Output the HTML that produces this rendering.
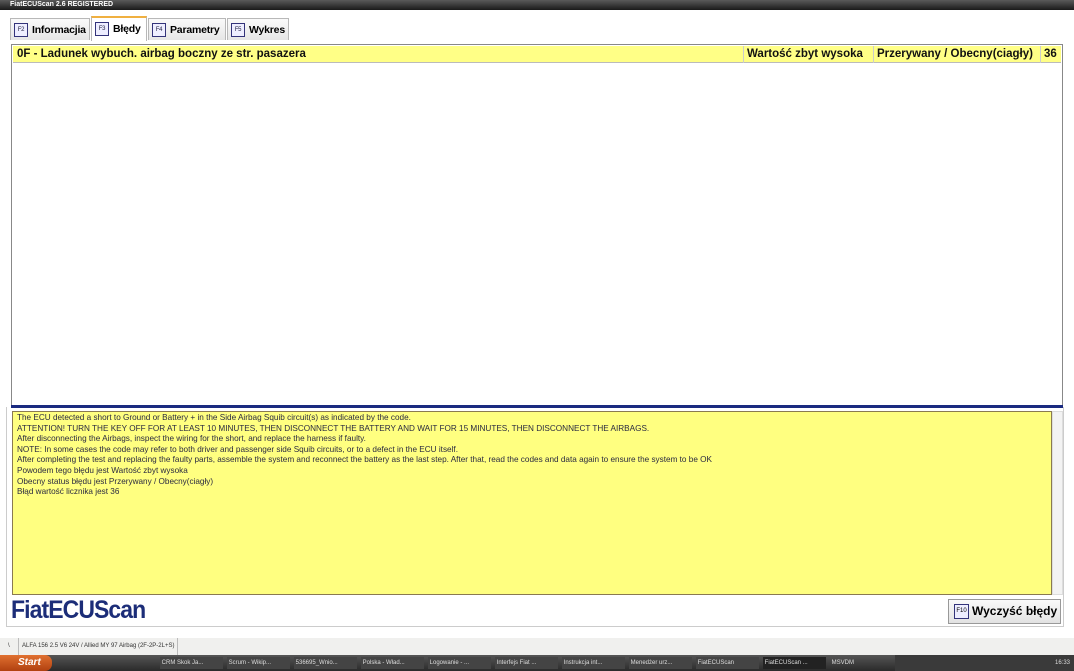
<!DOCTYPE html>
<html><head><meta charset="utf-8"><style>
*{margin:0;padding:0;box-sizing:border-box}
body{width:1074px;height:671px;overflow:hidden;background:#f4f4f2;font-family:"Liberation Sans",sans-serif;position:relative}
.abs{position:absolute}
.title{left:0;top:0;width:1074px;height:10px;background:linear-gradient(#5a5a5a,#1a1a1a);color:#fff;font-size:7px;font-weight:bold;line-height:10px;padding-left:10px}
.tab{top:18px;height:22px;border:1px solid #b8b8b8;border-bottom:none;background:linear-gradient(#fafafa,#e6e6e6);font-size:10.5px;font-weight:bold;line-height:22px;padding-left:21px;letter-spacing:-0.2px}
.tab .k{position:absolute;left:3px;top:4px;width:14px;height:14px;border:1px solid #33337a;background:#eef;font-size:6px;line-height:12px;text-align:center;color:#224;font-weight:normal}
.panel{left:11px;top:44px;width:1052px;height:364px;border:1px solid #888;background:#fff}
.hdr{left:1px;top:1px;width:1048px;height:17px;background:#ffff86;border-bottom:1px solid #bbb;font-size:11.5px;font-weight:bold;line-height:17px;color:#111}
.msg{left:12px;top:411px;width:1040px;height:184px;background:#ffff80;border:1px solid #8a7a50;font-size:8.2px;line-height:10.6px;color:#2a2a40;padding:1px 4px}
</style></head><body>
<div class="abs title">FiatECUScan 2.6 REGISTERED</div>
<div class="abs" style="left:0;top:10px;width:1074px;height:628px;background:#fff"></div>
<div class="abs tab" style="left:10px;width:80px"><span class="k">F2</span>Informacjia</div>
<div class="abs tab" style="left:91px;top:16px;height:25px;width:56px;background:#fff;border-top:2px solid #f0b040"><span class="k">F3</span>Błędy</div>
<div class="abs tab" style="left:148px;width:78px"><span class="k">F4</span>Parametry</div>
<div class="abs tab" style="left:227px;width:62px"><span class="k">F5</span>Wykres</div>
<div class="abs panel">
<div class="abs hdr"><span class="abs" style="left:4px">0F - Ladunek wybuch. airbag boczny ze str. pasazera</span>
<span class="abs" style="left:730px;border-left:1px solid #ccc;padding-left:3px">Wartość zbyt wysoka</span>
<span class="abs" style="left:860px;border-left:1px solid #ccc;padding-left:3px">Przerywany / Obecny(ciagły)</span>
<span class="abs" style="left:1027px;border-left:1px solid #ccc;padding-left:3px">36</span></div>
</div>
<div class="abs" style="left:11px;top:405px;width:1052px;height:3px;background:#1a2a80"></div>
<div class="abs msg">The ECU detected a short to Ground or Battery + in the Side Airbag Squib circuit(s) as indicated by the code.<br>ATTENTION! TURN THE KEY OFF FOR AT LEAST 10 MINUTES, THEN DISCONNECT THE BATTERY AND WAIT FOR 15 MINUTES, THEN DISCONNECT THE AIRBAGS.<br>After disconnecting the Airbags, inspect the wiring for the short, and replace the harness if faulty.<br>NOTE: In some cases the code may refer to both driver and passenger side Squib circuits, or to a defect in the ECU itself.<br>After completing the test and replacing the faulty parts, assemble the system and reconnect the battery as the last step. After that, read the codes and data again to ensure the system to be OK<br>Powodem tego błędu jest Wartość zbyt wysoka<br>Obecny status błędu jest Przerywany / Obecny(ciagły)<br>Błąd wartość licznika jest 36</div>
<div class="abs" style="left:1052px;top:411px;width:11px;height:184px;background:#f3f3f3;border:1px solid #ddd"></div>
<div class="abs" style="left:6px;top:407px;width:1058px;height:220px;border:1px solid #ccc;border-top:none;pointer-events:none"></div>
<div class="abs" style="left:11px;top:596px;font-size:25px;font-weight:bold;color:#1c2d78;letter-spacing:-1px;transform:scaleX(.92);transform-origin:left">FiatECUScan</div>
<div class="abs" style="left:948px;top:599px;width:113px;height:25px;border:1px solid #999;background:linear-gradient(#fafafa,#e2e2e2);font-size:12px;font-weight:bold;line-height:23px;padding-left:23px">Wyczyść błędy<span class="abs" style="left:5px;top:4px;width:15px;height:15px;border:1px solid #33337a;background:#eef;font-size:6px;line-height:13px;text-align:center;font-weight:normal">F10</span></div>
<div class="abs" style="left:0;top:638px;width:1074px;height:17px;background:#f0f0ee;font-size:6px;line-height:17px;color:#333"><span style="padding-left:8px">\</span><span class="abs" style="left:18px;border-left:1px solid #bbb;border-right:1px solid #bbb;padding:0 3px">ALFA 156 2.5 V6 24V / Allied MY 97 Airbag (2F-2P-2L+S)</span></div>
<div class="abs" style="left:0;top:655px;width:1074px;height:16px;background:linear-gradient(#555,#2a2a2a)"></div>
<div class="abs" style="left:0;top:655px;width:52px;height:16px;background:linear-gradient(#e07030,#b04010);color:#fff;font-size:10px;font-weight:bold;font-style:italic;line-height:16px;padding-left:18px;border-radius:0 7px 7px 0">Start</div>
<div class="abs" style="left:160px;top:657px;width:730px;height:12px;display:flex;gap:4px;font-size:6px;color:#ddd;line-height:12px">
<span style="width:63px;background:#444">&nbsp;CRM Skok Ja...</span><span style="width:63px;background:#444">&nbsp;Scrum - Wikip...</span><span style="width:63px;background:#444">&nbsp;536695_Wnio...</span><span style="width:63px;background:#444">&nbsp;Polska - Wład...</span><span style="width:63px;background:#444">&nbsp;Logowanie - ...</span><span style="width:63px;background:#444">&nbsp;Interfejs Fiat ...</span><span style="width:63px;background:#444">&nbsp;Instrukcja int...</span><span style="width:63px;background:#444">&nbsp;Menedżer urz...</span><span style="width:63px;background:#444">&nbsp;FiatECUScan</span><span style="width:63px;background:#222">&nbsp;FiatECUScan ...</span><span>&nbsp;MSVDM</span></div>
<div class="abs" style="left:895px;top:655px;width:179px;height:16px;background:#3a3a3a;color:#ddd;font-size:6px;line-height:16px;text-align:right;padding-right:4px">16:33</div>
</body></html>
